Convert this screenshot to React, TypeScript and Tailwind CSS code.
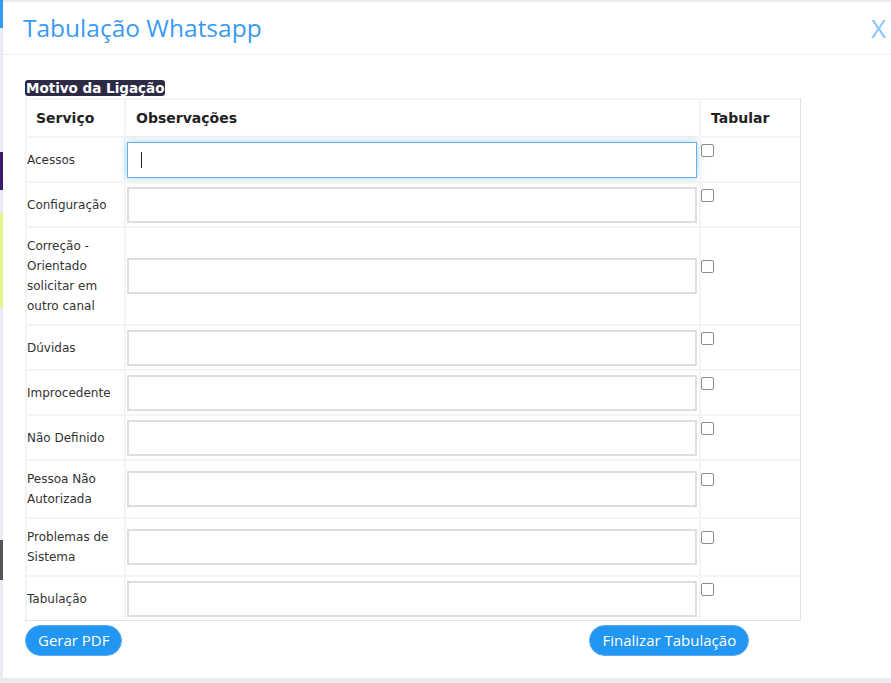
import React from 'react';

const rows = [
	{ label: 'Acessos', h: 'h-[45px]', focus: true },
	{ label: 'Configuração', h: 'h-[45px]' },
	{ label: 'Correção - Orientado solicitar em outro canal', h: 'h-[98px]' },
	{ label: 'Dúvidas', h: 'h-[45px]' },
	{ label: 'Improcedente', h: 'h-[45px]' },
	{ label: 'Não Definido', h: 'h-[45px]' },
	{ label: 'Pessoa Não Autorizada', h: 'h-[58px]' },
	{ label: 'Problemas de Sistema', h: 'h-[58px]' },
	{ label: 'Tabulação', h: 'h-[45px]' },
];

const cell = 'border-t-2 border-l-2 border-[#f4f4f4]';

const App = () => {
	return (
		<div className="flex w-[891px] h-[683px] overflow-hidden bg-[#e9ecf1] font-['DejaVu_Sans',sans-serif]">
			{/* bits of the page behind the modal */}
			<div className="flex flex-col w-[3px] shrink-0">
				<div className="h-[28px] bg-[#3399f3]"></div>
				<div className="h-[124px]"></div>
				<div className="h-[38px] bg-[#3c1a6e]"></div>
				<div className="h-[23px]"></div>
				<div className="h-[94px] bg-[#e3f58c]"></div>
				<div className="h-[233px]"></div>
				<div className="h-[40px] bg-[#555]"></div>
			</div>
			<div className="flex flex-col flex-1 mt-[2px] h-[676px] bg-white">
				<div className="flex items-center justify-between h-[53px] pl-[20px] pr-[5px] border-b border-[#eef0f2]">
					<h1 className="text-[24.5px] text-[#3a9af2] font-['Open_Sans',sans-serif] leading-none">Tabulação Whatsapp</h1>
					<span className="text-[26px] text-[#86c6f8] font-['Open_Sans',sans-serif] leading-none">X</span>
				</div>
				<div className="flex flex-col pl-[22px] pt-[25px]">
					<span className="block w-fit h-[16px] px-[1px] rounded-[3px] bg-[#2c2b46] text-white text-[13.5px] font-bold leading-[16px]">Motivo da Ligação</span>
					<div className="w-[776px] mt-[2px] border-r border-b border-[#e0e4ea] text-[12px] text-[#333]">
						<div className="flex h-[38px] font-bold text-[14px] text-[#222]">
							<div className={`${cell} w-[99px] flex items-center pl-[9px]`}>Serviço</div>
							<div className={`${cell} w-[575px] flex items-center pl-[10px]`}>Observações</div>
							<div className={`${cell} flex-1 flex items-center pl-[10px]`}>Tabular</div>
						</div>
						{rows.map((r) => (
							<div key={r.label} className={`flex ${r.h}`}>
								<div className={`${cell} w-[99px] flex items-center leading-[20px] pr-[4px]`}>{r.label}</div>
								<div className={`${cell} w-[575px] flex items-center pl-[1px]`}>
									<div
										className={
											r.focus
												? 'flex items-center w-[570px] h-[36px] border border-[#66afe9] shadow-[0_0_8px_rgba(102,175,233,0.6)] pl-[13px]'
												: 'w-[570px] h-[36px] border-2 border-[#dedede]'
										}
									>
										{r.focus && <span className="w-px h-[16px] bg-[#222]"></span>}
									</div>
								</div>
								<div className={`${cell} flex-1 flex items-center`}>
									<div className="h-[36px] pt-[2px]">
										<input type="checkbox" className="block appearance-none w-[13px] h-[13px] border border-[#8c8c8c] rounded-[2px] bg-white" />
									</div>
								</div>
							</div>
						))}
					</div>
					<div className="flex w-[776px] mt-[4px] font-['Open_Sans',sans-serif]">
						<button className="h-[31px] px-[12px] rounded-full bg-[#2196f3] text-white text-[15px] border border-[#5aa9ee]">Gerar PDF</button>
						<button className="ml-[467px] h-[31px] px-[12px] rounded-full bg-[#2196f3] text-white text-[15px] border border-[#5aa9ee]">Finalizar Tabulação</button>
					</div>
				</div>
			</div>
		</div>
	);
};

export default App;
